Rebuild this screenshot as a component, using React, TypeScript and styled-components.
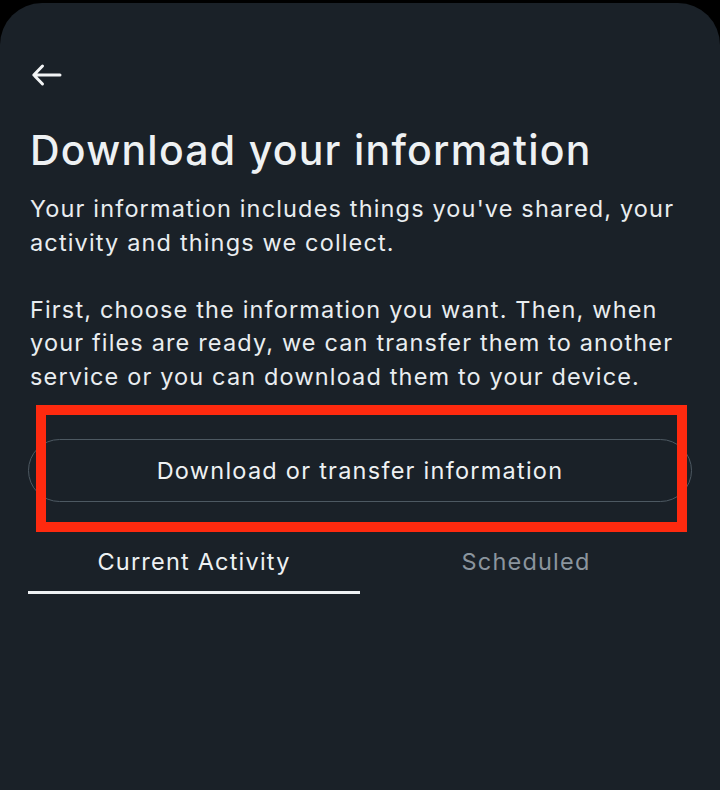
import React from "react";
import styled, { createGlobalStyle } from "styled-components";

const Global = createGlobalStyle`
  html, body { margin: 0; padding: 0; background: #000; }
  body { font-family: Inter, "Noto Sans", sans-serif; -webkit-font-smoothing: antialiased; }
`;

const Panel = styled.main`
  margin-top: 3px;
  min-height: 787px;
  box-sizing: border-box;
  background: #1a2128;
  border-radius: 42px 42px 0 0;
  padding: 0 28px;
  display: flex;
  flex-direction: column;
  color: #eef1f3;
`;

const BackButton = styled.button`
  all: unset;
  display: flex;
  width: 32px;
  height: 24px;
  margin-top: 60px;
  margin-left: 3px;
  color: #f2f4f5;
  cursor: pointer;
`;

const Title = styled.h1`
  margin: 38px 0 0 2px;
  font-size: 41px;
  line-height: 50px;
  font-weight: 500;
  letter-spacing: 1.25px;
  color: #eef1f3;
`;

const Body = styled.p<{ $first?: boolean }>`
  margin: ${(p) => (p.$first ? "17px" : "33.5px")} 0 0 2px;
  font-size: 23.5px;
  line-height: 33.5px;
  font-weight: 400;
  letter-spacing: 1.15px;
  color: #e9edf0;
`;

const ButtonWrap = styled.div`
  position: relative;
  margin-top: 46px;
`;

const OutlineButton = styled.button`
  all: unset;
  box-sizing: border-box;
  display: flex;
  align-items: center;
  justify-content: center;
  width: 100%;
  height: 63px;
  border: 1.5px solid #4d5962;
  border-radius: 32px;
  font-size: 23.5px;
  font-weight: 400;
  letter-spacing: 1.25px;
  color: #eef1f3;
`;

const Highlight = styled.div`
  position: absolute;
  top: -34px;
  bottom: -30px;
  left: 8px;
  right: 5px;
  border: 10px solid #ff2a0f;
  pointer-events: none;
`;

const Tabs = styled.div`
  display: grid;
  grid-template-columns: 1fr 1fr;
  margin-top: 33px;
`;

const Tab = styled.div<{ $active?: boolean }>`
  display: flex;
  align-items: center;
  justify-content: center;
  height: 59px;
  box-sizing: border-box;
  padding-bottom: 3px;
  font-size: 23.5px;
  font-weight: 400;
  letter-spacing: 1.2px;
  color: ${(p) => (p.$active ? "#eef1f3" : "#8b959e")};
  border-bottom: 3px solid ${(p) => (p.$active ? "#eef1f3" : "transparent")};
`;

export default function App() {
  return (
    <>
      <Global />
      <Panel>
        <BackButton aria-label="Back">
          <svg width="32" height="24" viewBox="0 0 32 24" fill="none">
            <path
              d="M29 12H3M11.5 3L2.8 12L11.5 21"
              stroke="currentColor"
              strokeWidth="3"
              strokeLinecap="round"
              strokeLinejoin="round"
            />
          </svg>
        </BackButton>
        <Title>Download your information</Title>
        <Body $first>
          Your information includes things you've shared, your activity and
          things we collect.
        </Body>
        <Body>
          First, choose the information you want. Then, when your files are
          ready, we can transfer them to another service or you can download
          them to your device.
        </Body>
        <ButtonWrap>
          <OutlineButton>Download or transfer information</OutlineButton>
          <Highlight />
        </ButtonWrap>
        <Tabs>
          <Tab $active>Current Activity</Tab>
          <Tab>Scheduled</Tab>
        </Tabs>
      </Panel>
    </>
  );
}
